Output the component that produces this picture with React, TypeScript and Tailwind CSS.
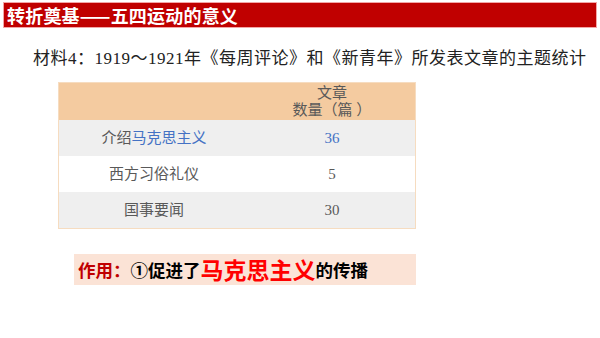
export default function App() {
  const rows = [
    { label: <>介绍<span className="text-[#4472c4]">马克思主义</span></>, count: '36', blue: true, bg: 'bg-[#efefef]' },
    { label: <>西方习俗礼仪</>, count: '5', blue: false, bg: 'bg-white' },
    { label: <>国事要闻</>, count: '30', blue: false, bg: 'bg-[#efefef]' },
  ]

  return (
    <div className="w-[600px] h-[338px] bg-white overflow-hidden font-['Noto_Sans_CJK_SC',sans-serif]">
      {/* Title bar */}
      <div className="mt-[2px] mx-[3px] h-[26px] bg-[#c00000] border border-[#f3a6a6] flex items-center pl-[3px]">
        <span className="text-white font-bold text-[18px] leading-none tracking-[0.2px]">转折奠基——五四运动的意义</span>
      </div>

      {/* Material caption */}
      <p className="mt-[19px] pl-[33px] text-[17px] leading-[24px] text-[#222] font-['Liberation_Serif','Noto_Sans_CJK_SC',serif] tracking-[0.5px]">
        材料4：1919～1921年《每周评论》和《新青年》所发表文章的主题统计
      </p>

      {/* Table */}
      <div className="ml-[58px] mt-[11px] w-[358px] border border-[#f6dcc0] text-[15px] text-[#595959] font-['Liberation_Serif','Noto_Sans_CJK_SC',serif]">
        <div className="grid grid-cols-[190px_1fr] h-[37px] bg-[#f4cba0]">
          <div />
          <div className="flex flex-col items-center justify-center leading-[17px]">
            <span>文章</span>
            <span>数量（篇 ）</span>
          </div>
        </div>
        {rows.map((r, i) => (
          <div key={i} className={`grid grid-cols-[190px_1fr] h-[36px] items-center ${r.bg}`}>
            <div className="text-center">{r.label}</div>
            <div className={`text-center ${r.blue ? 'text-[#4472c4]' : ''}`}>{r.count}</div>
          </div>
        ))}
      </div>

      {/* Conclusion box */}
      <div className="ml-[74px] mt-[25px] w-[342px] h-[31px] bg-[#fbe3d6] flex items-center pl-[4px] font-bold text-[17.5px] leading-none">
        <span className="text-[#c00000]">作用：</span>
        <span className="text-black">①促进了</span>
        <span className="text-[#ff0000] text-[23px]">马克思主义</span>
        <span className="text-black">的传播</span>
      </div>
    </div>
  )
}
